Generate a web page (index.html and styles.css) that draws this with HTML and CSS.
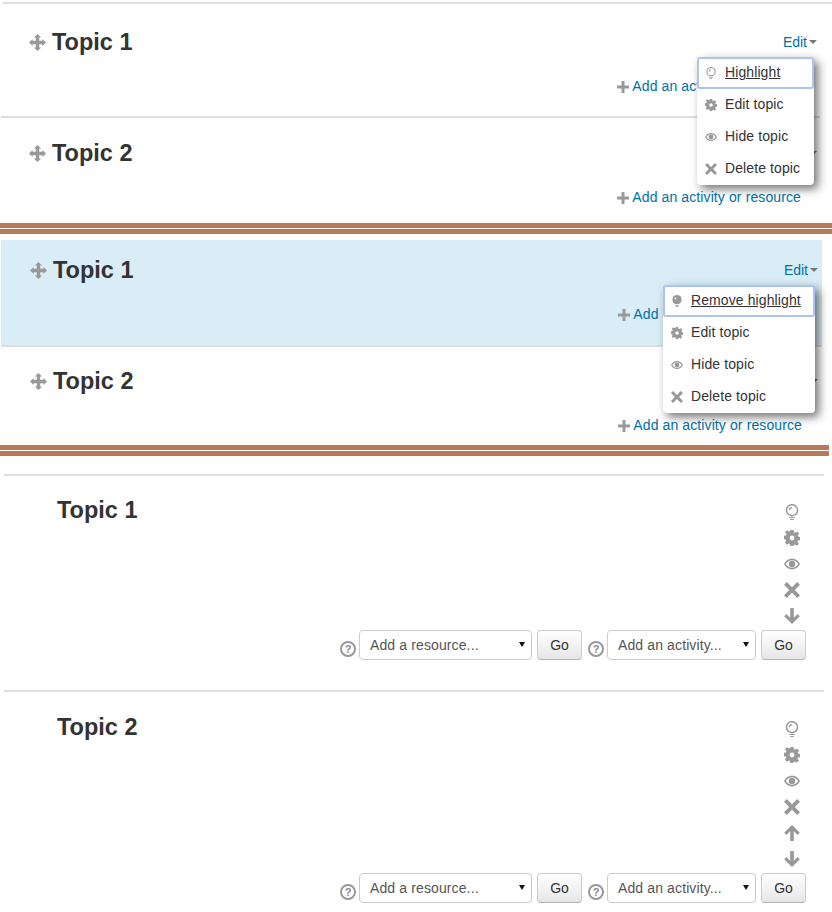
FILE: index.html
```html
<!DOCTYPE html>
<html>

<head>
  <meta charset="UTF-8">
  <title>Topic highlight</title>
  <link rel="stylesheet" href="styles.css">
</head>

<body>
  <svg class="defs">
    <symbol id="i-move" viewBox="0 0 16 16">
      <path d="M8 0l3.400 3.400H9.600v3h3V4.600L16 8l-3.400 3.400V9.600h-3v3h1.800L8 16l-3.400-3.400h1.800v-3h-3v1.800L0 8l3.400-3.400v1.800h3v-3H4.600z" />
    </symbol>
    <symbol id="i-plus" viewBox="0 0 12 12">
      <path d="M4.500 0h3v4.500H12v3H7.500V12h-3V7.500H0v-3h4.500z" />
    </symbol>
    <symbol id="i-bulb" viewBox="0 0 16 16">
      <circle cx="8" cy="6.200" r="5.500" fill="none" stroke="currentColor" stroke-width="1.500" />
      <path d="M8 3a3.200 3.200 0 0 0-3.200 3.200H6A2 2 0 0 1 8 4.200z" />
      <path d="M5.200 13h5.600v1.100H5.200zM6.200 14.900h3.600V16H6.200z" />
    </symbol>
    <symbol id="i-bulb-on" viewBox="0 0 16 16">
      <circle cx="8" cy="6.200" r="6.200" />
      <path d="M5.500 13.200h5v1h-5zM6.200 14.800h3.600v1H6.200z" />
      <circle cx="6" cy="4.600" r="1.200" fill="#fff" />
    </symbol>
    <symbol id="i-gear" viewBox="0 0 16 16">
      <path fill-rule="evenodd" d="M6.400 0h3.200l.4 2.300 1.200.5 1.900-1.300 2 2-1.400 1.900.5 1.200 1.800.4v3.200l-2 .4-.5 1.200 1.300 1.900-2 2-1.900-1.300-1.200.5-.4 2.100H6.400L6 13.900l-1.200-.5-1.900 1.300-2-2 1.300-1.900-.5-1.200-1.700-.4V5.800l1.900-.4.5-1.200-1.400-1.900 2-2 1.900 1.300 1.200-.5zM8 5.600a2.400 2.400 0 1 0 0 4.800 2.400 2.400 0 0 0 0-4.800z" />
    </symbol>
    <symbol id="i-eye" viewBox="0 0 16 16">
      <path fill-rule="evenodd" d="M8 2.600c3.400 0 6.400 2.200 8 5.400-1.600 3.200-4.600 5.400-8 5.400S1.600 11.200 0 8c1.600-3.200 4.600-5.400 8-5.400zM8 4.200C5.500 4.200 3.200 5.700 1.800 8 3.200 10.300 5.500 11.800 8 11.800s4.800-1.500 6.200-3.800C12.800 5.700 10.500 4.200 8 4.200z" />
      <circle cx="8" cy="8" r="3.200" />
    </symbol>
    <symbol id="i-close" viewBox="0 0 16 16">
      <path d="M2.800 0L8 5.200 13.200 0 16 2.800 10.800 8 16 13.200 13.200 16 8 10.800 2.800 16 0 13.200 5.200 8 0 2.800z" />
    </symbol>
    <symbol id="i-up" viewBox="0 0 16 16">
      <path d="M8 0l7.800 7.800-2.200 2.200-3.800-3.800V16H6.200V6.200L2.400 10 .2 7.800z" />
    </symbol>
    <symbol id="i-down" viewBox="0 0 16 16">
      <path d="M8 16L.2 8.200 2.400 6l3.800 3.800V0h3.600v9.800L13.600 6l2.200 2.200z" />
    </symbol>
  </svg>

  <!-- drop down, not highlighted -->
  <section class="demo">
    <article class="topic t1">
      <div class="topic-head">
        <svg class="ico move"><use href="#i-move" /></svg>
        <h3>Topic 1</h3>
        <a class="edit">Edit<i class="caret"></i></a>
      </div>
      <div class="topic-add"><svg class="ico plus"><use href="#i-plus" /></svg><a>Add an activity or resource</a></div>
      <ul class="menu menu-a">
        <li class="focus"><svg class="ico"><use href="#i-bulb" /></svg><span>Highlight</span></li>
        <li><svg class="ico"><use href="#i-gear" /></svg><span>Edit topic</span></li>
        <li><svg class="ico"><use href="#i-eye" /></svg><span>Hide topic</span></li>
        <li><svg class="ico"><use href="#i-close" /></svg><span>Delete topic</span></li>
      </ul>
    </article>
    <article class="topic t2">
      <div class="topic-head">
        <svg class="ico move"><use href="#i-move" /></svg>
        <h3>Topic 2</h3>
        <a class="edit">Edit<i class="caret"></i></a>
      </div>
      <div class="topic-add"><svg class="ico plus"><use href="#i-plus" /></svg><a>Add an activity or resource</a></div>
    </article>
  </section>
  <div class="bars"></div>

  <!-- drop down, highlighted -->
  <section class="demo demo-on">
    <article class="topic t3">
      <div class="topic-head">
        <svg class="ico move"><use href="#i-move" /></svg>
        <h3>Topic 1</h3>
        <a class="edit">Edit<i class="caret"></i></a>
      </div>
      <div class="topic-add"><svg class="ico plus"><use href="#i-plus" /></svg><a>Add an activity or resource</a></div>
      <ul class="menu menu-b">
        <li class="focus"><svg class="ico"><use href="#i-bulb-on" /></svg><span>Remove highlight</span></li>
        <li><svg class="ico"><use href="#i-gear" /></svg><span>Edit topic</span></li>
        <li><svg class="ico"><use href="#i-eye" /></svg><span>Hide topic</span></li>
        <li><svg class="ico"><use href="#i-close" /></svg><span>Delete topic</span></li>
      </ul>
    </article>
    <article class="topic t4">
      <div class="topic-head">
        <svg class="ico move"><use href="#i-move" /></svg>
        <h3>Topic 2</h3>
        <a class="edit">Edit<i class="caret"></i></a>
      </div>
      <div class="topic-add"><svg class="ico plus"><use href="#i-plus" /></svg><a>Add an activity or resource</a></div>
    </article>
  </section>
  <div class="bars bars-short"></div>

  <!-- icons and selects -->
  <section class="demo demo-plain">
    <article class="plain p1">
      <div class="plain-top">
        <h3>Topic 1</h3>
        <div class="actions">
          <svg class="ico"><use href="#i-bulb" /></svg>
          <svg class="ico"><use href="#i-gear" /></svg>
          <svg class="ico"><use href="#i-eye" /></svg>
          <svg class="ico"><use href="#i-close" /></svg>
          <svg class="ico"><use href="#i-down" /></svg>
        </div>
      </div>
      <div class="chooser">
        <span class="help">?</span>
        <span class="pick pick-res"><select><option>Add a resource...</option></select></span>
        <button>Go</button>
        <span class="help">?</span>
        <span class="pick pick-act"><select><option>Add an activity...</option></select></span>
        <button>Go</button>
      </div>
    </article>
    <article class="plain p2">
      <div class="plain-top">
        <h3>Topic 2</h3>
        <div class="actions">
          <svg class="ico"><use href="#i-bulb" /></svg>
          <svg class="ico"><use href="#i-gear" /></svg>
          <svg class="ico"><use href="#i-eye" /></svg>
          <svg class="ico"><use href="#i-close" /></svg>
          <svg class="ico"><use href="#i-up" /></svg>
          <svg class="ico"><use href="#i-down" /></svg>
        </div>
      </div>
      <div class="chooser">
        <span class="help">?</span>
        <span class="pick pick-res"><select><option>Add a resource...</option></select></span>
        <button>Go</button>
        <span class="help">?</span>
        <span class="pick pick-act"><select><option>Add an activity...</option></select></span>
        <button>Go</button>
      </div>
    </article>
  </section>
</body>

</html>
```

FILE: styles.css
```css
html,
body {
  margin: 0;
  background: #fff;
}

body {
  height: 912px;
  overflow: hidden;
  font-family: "Liberation Sans", Arial, sans-serif;
  font-size: 14px;
  color: #333;
}

.defs {
  display: none;
}

.ico {
  display: block;
  width: 16px;
  height: 16px;
  fill: #999;
  color: #999;
  flex: none;
}

h3 {
  margin: 0;
  font-size: 23.5px;
  line-height: 30px;
  font-weight: bold;
  color: #333;
}

.demo {
  padding-top: 2px;
}

.topic {
  position: relative;
  border-top: 2px solid #ddd;
}

.topic-head {
  display: flex;
  align-items: center;
  height: 30px;
}

.move {
  width: 17px;
  height: 17px;
  margin-right: 6px;
}

.edit {
  margin-left: auto;
  color: #0070a8;
  display: flex;
  align-items: center;
}

.caret {
  width: 0;
  height: 0;
  margin-left: 2px;
  border: 4px solid transparent;
  border-top-color: #777;
  border-bottom: 0;
}

.topic-add {
  display: flex;
  align-items: center;
  justify-content: flex-end;
  height: 20px;
  margin-top: 19px;
  color: #0070a8;
  letter-spacing: 0.11px;
}

.plus {
  width: 12px;
  height: 12px;
  margin-right: 3px;
  margin-top: 2px;
}

.t1 {
  margin-left: 3px;
  padding: 23px 0 20px;
}

.t1 .topic-head {
  padding: 0 15px 0 26px;
}

.t1 .topic-add {
  padding-right: 31px;
}

.t2 {
  margin: 0 12px 0 1px;
  padding: 20px 0 16px;
}

.t2 .topic-head {
  padding: 0 3px 0 28px;
}

.t2 .topic-add {
  padding-right: 19px;
}

.bars {
  position: relative;
  height: 5px;
  margin-bottom: 12px;
  background: #b97a57;
}

.bars::after {
  content: "";
  display: block;
  position: relative;
  top: 6px;
  height: 5px;
  background: #b97a57;
}

.bars-short {
  width: 829px;
}

.demo-on {
  width: 821px;
  margin-left: 1px;
  padding-top: 0;
}

.t3 {
  border-top: 0;
  background: #d9edf7;
  padding: 15px 0 21px;
}

.t4 {
  padding: 19px 0 10px;
}

.demo-on .topic-head {
  padding: 0 4px 0 29px;
}

.demo-on .topic-add {
  padding-right: 20px;
}

.menu {
  position: absolute;
  z-index: 2;
  margin: 0;
  padding: 0;
  list-style: none;
  background: #fff;
  border-radius: 4px;
  box-shadow: 4px 4px 10px rgba(0, 0, 0, 0.55);
  letter-spacing: 0.1px;
}

.menu li {
  display: flex;
  align-items: center;
  box-sizing: border-box;
  height: 32px;
  padding-left: 8px;
}

.menu span {
  margin-top: -2px;
}

.menu .ico {
  width: 12px;
  height: 12px;
  margin-right: 8px;
}

.menu li.focus {
  border: 2px solid #a9c4f5;
  border-radius: 3px;
  padding-left: 6px;
}

.focus span {
  text-decoration: underline;
}

.menu-a {
  top: 53px;
  right: 18px;
  width: 117px;
}

.menu-b {
  top: 45px;
  right: 7px;
  width: 152px;
}

.demo-plain {
  padding-top: 12px;
}

.plain {
  width: 820px;
  margin-left: 4px;
  border-top: 2px solid #ddd;
}

.p1 {
  padding-top: 19px;
  padding-bottom: 30px;
}

.p2 {
  padding-top: 20px;
}

.plain-top {
  display: flex;
  justify-content: space-between;
  padding: 0 24px 0 53px;
}

.actions {
  display: flex;
  flex-direction: column;
  gap: 10px;
  margin-top: 9px;
}

.chooser {
  display: flex;
  align-items: center;
  justify-content: flex-end;
  gap: 5px;
  margin-top: 6px;
  padding-right: 18px;
}

.help {
  box-sizing: border-box;
  width: 16px;
  height: 16px;
  margin: 8px -2px 0 1px;
  border: 2px solid #999;
  border-radius: 50%;
  color: #888;
  font-size: 11px;
  font-weight: bold;
  line-height: 12px;
  text-align: center;
}

.pick {
  position: relative;
  display: block;
}

.pick::after {
  content: "";
  position: absolute;
  top: 12px;
  right: 7px;
  border: 3px solid transparent;
  border-top: 5px solid #111;
  border-bottom: 0;
}

select {
  display: block;
  box-sizing: border-box;
  height: 30px;
  padding: 0 0 0 10px;
  appearance: none;
  background: #fff;
  border: 1px solid #ccc;
  border-radius: 4px;
  font-family: inherit;
  font-size: 14px;
  letter-spacing: 0.12px;
  color: #555;
}

.pick-res select {
  width: 173px;
}

.pick-act select {
  width: 149px;
}

button {
  width: 45px;
  height: 30px;
  padding: 0;
  border: 1px solid #ccc;
  border-bottom-color: #b3b3b3;
  border-radius: 4px;
  background: linear-gradient(#fff, #e6e6e6);
  font-family: inherit;
  font-size: 14px;
  color: #333;
}
```
